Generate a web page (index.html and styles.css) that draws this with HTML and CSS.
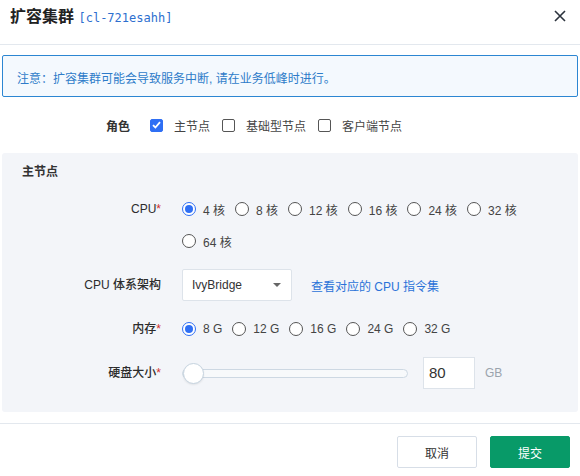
FILE: index.html
```html
<!DOCTYPE html>
<html>
<head>
<meta charset="utf-8">
<link rel="stylesheet" href="styles.css">
</head>
<body>
<div class="dialog">
  <div class="header">
    <div class="title">扩容集群 <span class="cid">[cl-721esahh]</span></div>
    <svg class="close" width="12" height="12" viewBox="0 0 12 12"><path d="M1 1L11 11M11 1L1 11" stroke="#2b333d" stroke-width="1.6" fill="none"/></svg>
  </div>
  <div class="alert">注意：扩容集群可能会导致服务中断, 请在业务低峰时进行。</div>
  <div class="role-row">
    <span class="role-label">角色</span>
    <label class="check"><span class="box on"><svg width="9" height="8" viewBox="0 0 9 8"><path d="M1 4.2L3.4 6.5L8 1.2" stroke="#fff" stroke-width="1.8" fill="none"/></svg></span>主节点</label>
    <label class="check"><span class="box"></span>基础型节点</label>
    <label class="check"><span class="box"></span>客户端节点</label>
  </div>
  <div class="panel">
    <div class="panel-title">主节点</div>
    <div class="form">
      <div class="label">CPU<i>*</i></div>
      <div class="radios">
        <span class="opt"><span class="radio on"></span>4 核</span>
        <span class="opt"><span class="radio"></span>8 核</span>
        <span class="opt"><span class="radio"></span>12 核</span>
        <span class="opt"><span class="radio"></span>16 核</span>
        <span class="opt"><span class="radio"></span>24 核</span>
        <span class="opt"><span class="radio"></span>32 核</span>
        <span class="opt"><span class="radio"></span>64 核</span>
      </div>
      <div class="label">CPU 体系架构</div>
      <div class="inline">
        <div class="select">IvyBridge<span class="caret"></span></div>
        <a class="link">查看对应的 CPU 指令集</a>
      </div>
      <div class="label">内存<i>*</i></div>
      <div class="radios">
        <span class="opt"><span class="radio on"></span>8 G</span>
        <span class="opt"><span class="radio"></span>12 G</span>
        <span class="opt"><span class="radio"></span>16 G</span>
        <span class="opt"><span class="radio"></span>24 G</span>
        <span class="opt"><span class="radio"></span>32 G</span>
      </div>
      <div class="label">硬盘大小<i>*</i></div>
      <div class="inline">
        <div class="slider"><span class="thumb"></span></div>
        <div class="num">80</div>
        <span class="unit">GB</span>
      </div>
    </div>
  </div>
  <div class="footer">
    <button class="btn">取消</button>
    <button class="btn primary">提交</button>
  </div>
</div>
</body>
</html>
```
FILE: styles.css
```css
* { box-sizing: border-box; }
body {
  margin: 0;
  background: #fff;
  font-family: "Liberation Sans", "Noto Sans CJK SC", sans-serif;
  font-size: 12px;
  color: #333;
}
.dialog { width: 580px; }
.header {
  height: 45px;
  padding: 7px 14px 0 10px;
  border-bottom: 1px solid #e3e8ee;
  display: flex;
  justify-content: space-between;
  align-items: flex-start;
}
.title {
  font-size: 16px;
  font-weight: bold;
  line-height: 20px;
  color: #222;
}
.cid {
  font-family: "DejaVu Sans Mono", monospace;
  font-size: 12px;
  font-weight: normal;
  color: #2d6fcf;
}
.close { margin-top: 3px; }
.alert {
  margin: 10px 2px 0 2px;
  height: 42px;
  padding: 13px 14px 0;
  line-height: 20px;
  border: 1px solid #2c86d2;
  border-radius: 2px;
  background: #f4f9fe;
  color: #2e7cc9;
  font-size: 12px;
}
.role-row {
  margin: 18px 0 18px 106px;
  height: 20px;
  display: flex;
  align-items: center;
}
.role-label { font-weight: bold; margin-right: 20px; color: #333; }
.check {
  display: flex;
  align-items: center;
  margin-right: 12px;
  color: #444;
}
.box {
  width: 13px;
  height: 13px;
  border: 1px solid #555;
  border-radius: 2px;
  margin-right: 11px;
  display: flex;
  align-items: center;
  justify-content: center;
  background: #fff;
}
.box.on { background: #2f6ff4; border-color: #2f6ff4; }
.panel {
  margin: 0 2px;
  background: #f3f5f9;
  border-radius: 3px;
  padding: 10px 18px 23px 0;
}
.panel-title {
  font-weight: bold;
  line-height: 18px;
  padding-left: 20px;
  color: #333;
}
.form {
  margin-top: 12px;
  display: grid;
  grid-template-columns: 159px 1fr;
  column-gap: 21px;
  row-gap: 12px;
}
.label {
  text-align: right;
  line-height: 32px;
  height: 32px;
  color: #2c2c2c;
  font-weight: 500;
}
.label i { font-style: normal; color: #d0302d; }
.radios {
  display: flex;
  flex-wrap: wrap;
}
.opt {
  display: flex;
  align-items: center;
  height: 32px;
  margin-right: 10px;
  color: #444;
}
.radio {
  width: 14px;
  height: 14px;
  border: 1px solid #555;
  border-radius: 50%;
  background: #fff;
  margin-right: 7px;
  position: relative;
}
.radio.on { border-color: #2f6ff4; }
.radio.on::after {
  content: "";
  position: absolute;
  left: 2px; top: 2px;
  width: 8px; height: 8px;
  border-radius: 50%;
  background: #2f6ff4;
}
.inline { display: flex; align-items: center; height: 32px; }
.select {
  width: 110px;
  height: 32px;
  border: 1px solid #dde3ea;
  border-radius: 2px;
  background: #fff;
  padding-left: 9px;
  line-height: 30px;
  color: #333;
  display: flex;
  justify-content: space-between;
  align-items: center;
  padding-right: 10px;
  font-size: 12px;
}
.caret {
  width: 0; height: 0;
  border-left: 4px solid transparent;
  border-right: 4px solid transparent;
  border-top: 4px solid #666;
}
.link { color: #2a72d8; margin-left: 19px; }
.slider {
  width: 226px;
  height: 9px;
  border: 1px solid #cdd8e3;
  border-radius: 5px;
  background: #f7f9fb;
  position: relative;
}
.thumb {
  position: absolute;
  left: 0; top: -7px;
  width: 21px; height: 21px;
  border-radius: 50%;
  background: #fff;
  border: 1px solid #c5d3df;
  box-shadow: 0 1px 2px rgba(0,0,0,0.08);
}
.num {
  margin-left: 15px;
  width: 52px;
  height: 32px;
  border: 1px solid #dde3ea;
  background: #fff;
  font-size: 15px;
  line-height: 30px;
  padding-left: 5px;
  color: #333;
}
.unit { margin-left: 10px; color: #9aa3ad; }
.footer {
  margin-top: 11px;
  border-top: 1px solid #e3e8ee;
  padding: 12px 10px 0 0;
  display: flex;
  justify-content: flex-end;
  gap: 13px;
}
.btn {
  width: 80px;
  height: 32px;
  border: 1px solid #d7dee7;
  border-radius: 2px;
  background: #fff;
  color: #333;
  font-family: "Liberation Sans", "Noto Sans CJK SC", sans-serif;
  font-size: 12px;
  padding: 0;
}
.btn.primary { background: #089a68; border-color: #089a68; color: #fff; }
```
